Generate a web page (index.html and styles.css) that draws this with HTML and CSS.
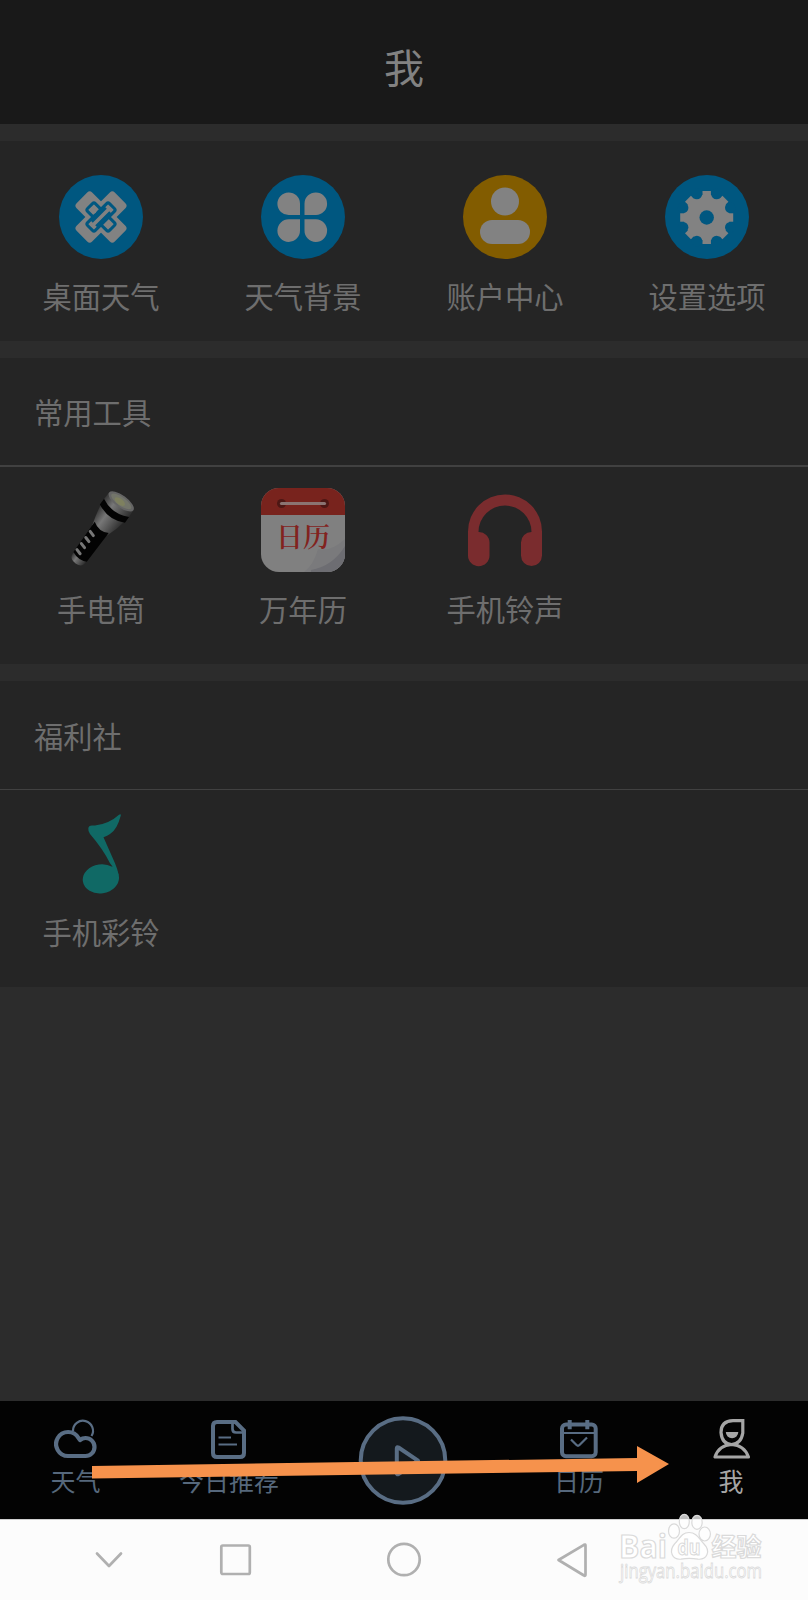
FILE: index.html
```
<!DOCTYPE html>
<html lang="zh-CN">
<head>
  <meta charset="UTF-8">
  <meta name="viewport" content="width=device-width, initial-scale=1.0">
  <title>我</title>
  <link rel="stylesheet" href="styles.css">
</head>
<body>
  <div class="screen">
    <header class="header">我</header>

    <main class="content">
      <section class="panel shortcuts">
        <div class="grid">
          <div class="item">
            <svg class="icon" viewBox="0 0 84 84">
              <circle cx="42" cy="42" r="42" fill="#005780"/>
              <g transform="rotate(45 42 42)" fill="#828282">
                <rect x="15" y="31" width="54" height="22" rx="3.500"/>
                <rect x="31" y="15" width="22" height="54" rx="3.500"/>
              </g>
              <g fill="#828282" stroke="#005780" stroke-width="3">
                <rect x="26.500" y="36.500" width="31" height="11" rx="2" transform="rotate(45 42 42)"/>
                <rect x="26.500" y="36.500" width="31" height="11" rx="2" transform="rotate(-45 42 42)"/>
              </g>
              <path d="M35 49l14-14" stroke="#005780" stroke-width="9"/>
              <path d="M33.500 34.500l2 2M48 49l2 2M34.500 49.500l15-15" stroke="#828282" stroke-width="3.600" stroke-linecap="round"/>
            </svg>
            <span class="label">桌面天气</span>
          </div>
          <div class="item">
            <svg class="icon" viewBox="0 0 84 84">
              <circle cx="42" cy="42" r="42" fill="#005780"/>
              <g fill="#828282">
                <path d="M39 40H28A11.300 11.300 0 1 1 39 28.500z"/>
                <path d="M43.500 40V28.500A11.300 11.300 0 1 1 55 40z"/>
                <path d="M39 44.300V55.500A11.300 11.300 0 1 1 28 44.300z"/>
                <path d="M43.500 44.300H55A11.300 11.300 0 1 1 43.500 55.500z"/>
              </g>
            </svg>
            <span class="label">天气背景</span>
          </div>
          <div class="item">
            <svg class="icon" viewBox="0 0 84 84">
              <circle cx="42" cy="42" r="42" fill="#825c00"/>
              <circle cx="42" cy="26.500" r="14" fill="#828282"/>
              <rect x="17" y="45" width="50" height="24" rx="12" fill="#828282"/>
            </svg>
            <span class="label">账户中心</span>
          </div>
          <div class="item">
            <svg class="icon" viewBox="0 0 84 84">
              <circle cx="42" cy="42" r="42" fill="#005780"/>
              <circle cx="41.700" cy="42.500" r="23" fill="#828282"/>
              <g fill="#828282">
                <rect x="37.500" y="16" width="8.400" height="53"/>
                <rect x="37.500" y="16" width="8.400" height="53" transform="rotate(45 41.700 42.500)"/>
                <rect x="37.500" y="16" width="8.400" height="53" transform="rotate(90 41.700 42.500)"/>
                <rect x="37.500" y="16" width="8.400" height="53" transform="rotate(135 41.700 42.500)"/>
              </g>
              <g fill="#005780">
                <circle cx="31.900" cy="18.900" r="5.300"/>
                <circle cx="51.500" cy="18.900" r="5.300"/>
                <circle cx="65.300" cy="32.700" r="5.300"/>
                <circle cx="65.300" cy="52.300" r="5.300"/>
                <circle cx="51.500" cy="66.100" r="5.300"/>
                <circle cx="31.900" cy="66.100" r="5.300"/>
                <circle cx="18.100" cy="52.300" r="5.300"/>
                <circle cx="18.100" cy="32.700" r="5.300"/>
                <circle cx="41.700" cy="42.500" r="7.200"/>
              </g>
            </svg>
            <span class="label">设置选项</span>
          </div>
        </div>
      </section>

      <section class="panel">
        <h2 class="title">常用工具</h2>
        <div class="grid">
          <div class="item">
            <svg class="icon" viewBox="0 0 84 84">
              <defs>
                <linearGradient id="metal">
                  <stop offset="0" stop-color="#363636"/>
                  <stop offset="0.35" stop-color="#777"/>
                  <stop offset="0.6" stop-color="#5c5c5c"/>
                  <stop offset="1" stop-color="#2d2d2d"/>
                </linearGradient>
              </defs>
              <!-- flashlight, drawn upright then tilted -->
              <g transform="translate(64 11) rotate(36)">
                <path d="M-8.500 70v5q1 5 8 5t7.500-5v-5z" fill="url(#metal)"/>
                <path d="M-14.500 18H14.500Q13 28 8.500 39H-9.500Q-13 28-14.500 18z" fill="url(#metal)"/>
                <path d="M-9.500 35q9 6 18 1L7.500 72q-8 4-16.500 0z" fill="#030303"/>
                <path d="M-7.500 45.500l5 1.500M-7.500 53l5 1.500M-7.500 60.500l5 1.500M-7.500 68l5 1.500" stroke="#777" stroke-width="3" stroke-linecap="round"/>
                <path d="M-15 3L-15.500 14q15 8 31 0L15 3z" fill="url(#metal)"/>
                <path d="M-15.500 11q15 8 31 0v7q-15 8-31 0z" fill="#030303"/>
                <ellipse cx="0" cy="3" rx="15" ry="6" fill="#656565"/>
                <ellipse cx="0" cy="3" rx="12" ry="4.300" fill="#73756a"/>
                <ellipse cx="-1" cy="4" rx="6" ry="3" fill="#7e805f"/>
              </g>
            </svg>
            <span class="label">手电筒</span>
          </div>
          <div class="item">
            <svg class="icon" viewBox="0 0 84 84">
              <defs>
                <clipPath id="sheet"><rect width="84" height="84" rx="18"/></clipPath>
              </defs>
              <g clip-path="url(#sheet)">
                <rect width="84" height="84" fill="#808080"/>
                <rect width="84" height="27" fill="#78231d"/>
                <path d="M43 84q9-6 14-23 13 3 27-10v33z" fill="#7a7a7c"/>
                <path d="M50 82q22-4 34-24v26H50z" fill="#6d6d72"/>
              </g>
              <circle cx="20.500" cy="15.500" r="4.500" fill="#4d1714"/>
              <circle cx="63.500" cy="15.500" r="4.500" fill="#4d1714"/>
              <path d="M20.500 15.500h43" stroke="#8b7472" stroke-width="3.200" stroke-linecap="round"/>
              <text class="calendar-text" x="15" y="59">日历</text>
            </svg>
            <span class="label">万年历</span>
          </div>
          <div class="item">
            <svg class="icon" viewBox="0 0 84 84">
              <path d="M5 60V43.500a37 37 0 0 1 74 0V67.500a10.500 10.500 0 0 1-21 0V54.500a10.500 10.500 0 0 1 10.500-10.500a26.500 26.500 0 0 0-53 0a10.500 10.500 0 0 1 11 10.500V67.500a10.700 10.700 0 0 1-21.500 0z" fill="#7a2c2e"/>
            </svg>
            <span class="label">手机铃声</span>
          </div>
        </div>
      </section>

      <section class="panel">
        <h2 class="title thin">福利社</h2>
        <div class="grid">
          <div class="item">
            <svg class="icon" viewBox="0 0 84 84" fill="#106965">
              <path d="M60 3.800Q62 2.500 61.800 4.500Q58 19 51 23Q48.500 25 44.500 26.300L56 52.300Q58.500 58 60 65L50 57L53.500 55.500L51 52.300Q44 38 31 23Q29 20 29.300 17.500Q29.500 14.500 33 14.500H36Q50 13 60 3.800z"/>
              <ellipse cx="41.900" cy="67.800" rx="18.200" ry="14.500" transform="rotate(-8 42 68)"/>
            </svg>
            <span class="label">手机彩铃</span>
          </div>
        </div>
      </section>
    </main>

    <nav class="tabbar">
      <div class="tab">
        <svg class="tab-icon" viewBox="0 0 44 42" fill="none" stroke="#596d84">
          <path d="M19 13a10 10 0 1 1 18.500 5" stroke-width="2.200"/>
          <path d="M14 38A12 12 0 1 1 24.500 20L26 22Q28.500 20 31.500 20A9 9 0 0 1 31.500 38z" stroke-width="4.200" stroke-linejoin="round"/>
        </svg>
        <span>天气</span>
      </div>
      <div class="tab">
        <svg class="tab-icon" viewBox="0 0 44 42" fill="none" stroke="#596d84">
          <path d="M10 4H28.500L37 12.500V35q0 4-4 4H10q-4 0-4-4V8q0-4 4-4z" stroke-width="4"/>
          <path d="M25.500 5v6q0 3.500 3.500 3.500h7" stroke-width="2.700"/>
          <path d="M11.500 19.500H24M11.500 26.500h18.500" stroke-width="2.200"/>
        </svg>
        <span>今日推荐</span>
      </div>
      <div class="tab">
        <svg class="play" viewBox="0 0 90 90" fill="none" stroke="#596d84">
          <circle cx="45" cy="45.500" r="42.300" fill="#14191d" stroke-width="4"/>
          <path d="M38.800 33.500Q38.800 31.500 40.500 32.500L60 45.700L40.500 59Q38.800 60 38.800 58z" stroke-width="4" stroke-linejoin="round"/>
        </svg>
      </div>
      <div class="tab">
        <svg class="tab-icon" viewBox="0 0 44 42" fill="none" stroke="#596d84">
          <rect x="5" y="6.500" width="33.700" height="31.700" rx="4" stroke-width="4"/>
          <path d="M12.700 2v9.300M30.300 2v9.300" stroke-width="4"/>
          <path d="M5 15h33.500" stroke-width="2.200"/>
          <path d="M14 21.500l5.500 5.500q1.500 1.500 3 0L30 19.500" stroke-width="2.200"/>
        </svg>
        <span>日历</span>
      </div>
      <div class="tab active">
        <svg class="tab-icon" viewBox="0 0 44 42" fill="none" stroke="#a6a6a6">
          <path d="M33.800 2.700H24Q12 3 12 14.500Q13 26 22.500 26.500Q32 26 33.800 15z" stroke-width="3.200"/>
          <path d="M16.800 14h12.500a6.200 6.200 0 0 1-12.500 0z" fill="#a6a6a6" stroke="none"/>
          <path d="M6 39h33.500Q35 27 22.700 26.500Q10 27 6 39z" stroke-width="3.200" stroke-linejoin="round"/>
        </svg>
        <span>我</span>
      </div>
    </nav>

    <footer class="sysnav">
      <svg viewBox="0 0 36 36"><path d="M6 11.500L18 24L30 11.500"/></svg>
      <svg viewBox="0 0 36 36"><rect x="3.300" y="3.500" width="28.500" height="28.500" rx="1.500"/></svg>
      <svg viewBox="0 0 36 36"><circle cx="18" cy="17.500" r="15.700"/></svg>
      <svg viewBox="0 0 36 36"><path d="M4.500 18L30 2.800Q31.500 2 31.500 3.500V32.500Q31.500 34.500 30 33.500z"/></svg>
    </footer>

    <!-- pointer towards the "me" tab -->
    <svg class="arrow" viewBox="0 0 578 38">
      <path d="M0 20L545 12V0L577 18L545 37V25L0 32.500z" fill="#f6924c"/>
    </svg>

    <svg class="watermark" viewBox="0 0 150 74">
      <g fill="#fff" stroke="#dadada" stroke-width="1.200">
        <g fill-opacity="0.75">
          <ellipse cx="55" cy="17" rx="5.500" ry="7.200"/>
          <ellipse cx="65.300" cy="7.500" rx="5" ry="7.200"/>
          <ellipse cx="78" cy="8.300" rx="5.200" ry="7"/>
          <ellipse cx="85.700" cy="20" rx="5.700" ry="7"/>
        </g>
        <path d="M70 18.500C78 18.500 80 25 85 30C92 37 88 46 79 45.200Q70 43.500 62 45.200C53 46 49.500 37 55.500 30C61 25 62 18.500 70 18.500z"/>
        <text class="brand" x="0" y="44" textLength="48" lengthAdjust="spacingAndGlyphs">Bai</text>
        <text class="du" x="58.500" y="41" textLength="23" lengthAdjust="spacingAndGlyphs">du</text>
        <text class="brand-cn" x="92.500" y="42">经验</text>
      </g>
      <text class="site" x="1" y="63.500" textLength="142" lengthAdjust="spacingAndGlyphs">jingyan.baidu.com</text>
    </svg>
  </div>
</body>
</html>
```

FILE: styles.css
```
* {
  box-sizing: border-box;
}

body {
  margin: 0;
  background: #2c2c2c;
  font-family: "Noto Sans CJK SC", sans-serif;
  color: #6e6e6e;
}

.screen {
  position: relative;
  display: flex;
  flex-direction: column;
  width: 808px;
  height: 1600px;
  overflow: hidden;
}

.header {
  height: 124px;
  padding-top: 10px;
  line-height: 112px;
  text-align: center;
  font-size: 40px;
  color: #828282;
  background: #191919;
}

.content {
  display: flex;
  flex: 1;
  flex-direction: column;
  gap: 17px;
  padding-top: 17px;
}

.panel {
  background: #252525;
}

.grid {
  display: grid;
  grid-template-columns: repeat(4, 1fr);
  padding: 21px 0 36px;
}

.shortcuts .grid {
  padding: 34px 0 26px;
}

.title {
  height: 109px;
  margin: 0;
  padding: 1px 34px 0;
  border-bottom: 2px solid #414141;
  font-size: 29.3px;
  font-weight: 400;
  line-height: 105px;
}

.title.thin {
  padding-top: 2px;
  border-bottom-width: 1px;
}

.item {
  display: flex;
  flex-direction: column;
  align-items: center;
}

.icon {
  width: 84px;
  height: 84px;
}

.label {
  margin-top: 16px;
  font-size: 29.3px;
  line-height: 40px;
}

.calendar-text {
  font-family: "Noto Serif CJK SC", "Noto Sans CJK SC", serif;
  font-size: 27px;
  font-weight: 600;
  fill: #82231e;
}

.tabbar {
  display: grid;
  grid-template-columns: 151px 156px 192px 160px 144px;
  height: 118px;
  padding-top: 17px;
  background: #030303;
}

.tab {
  display: flex;
  flex-direction: column;
  align-items: center;
  font-size: 25px;
  line-height: 36px;
  color: #56687c;
}

.tab.active {
  color: #a6a6a6;
}

.tab-icon {
  width: 44px;
  height: 42px;
  margin-bottom: 2px;
}

.play {
  width: 90px;
  height: 90px;
  margin-top: -3px;
}

.sysnav {
  display: flex;
  gap: 132px;
  height: 81px;
  padding: 22px 0 0 91px;
  border-top: 1px solid #cfcfcf;
  background: #fcfcfc;
}

.sysnav svg {
  width: 36px;
  height: 36px;
  fill: none;
  stroke: #b0b0b0;
  stroke-width: 2.7;
  stroke-linecap: round;
  stroke-linejoin: round;
}

.sysnav svg:first-child {
  margin-right: -41px;
}

.arrow {
  position: absolute;
  left: 92px;
  top: 1446px;
  width: 578px;
  height: 38px;
}

/* watermark sits over the tab bar edge */
.watermark {
  position: absolute;
  left: 619px;
  top: 1514px;
  width: 150px;
  height: 74px;
  overflow: visible;
}

.brand {
  font: bold 32px "Open Sans", sans-serif;
}

.du {
  font: bold 22px "Open Sans", sans-serif;
}

.brand-cn {
  font-size: 25px;
  font-weight: 700;
}

.site {
  font: 20px "Open Sans", sans-serif;
  fill: #fff;
  stroke: #dadada;
  stroke-width: 0.8;
}
```
